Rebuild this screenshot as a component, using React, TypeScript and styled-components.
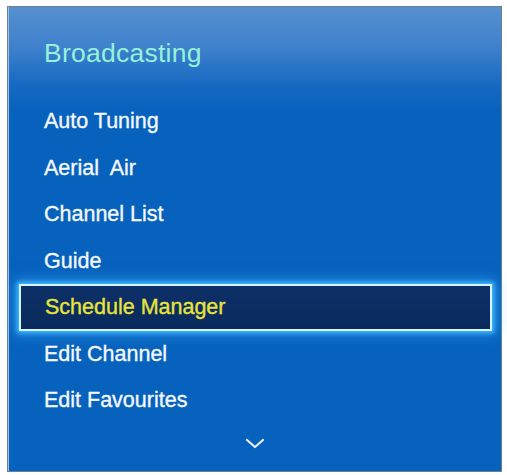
import styled, { createGlobalStyle } from 'styled-components';

const GlobalStyle = createGlobalStyle`
    html, body {
        margin: 0;
        padding: 0;
        background: #ffffff;
    }
`

const SPage = styled.div`
    width: 507px;
    height: 475px;
    padding: 6px 5px 3px 7px;
    box-sizing: border-box;
    font-family: 'Liberation Sans', Arial, sans-serif;
`

const SPanel = styled.section`
    height: 100%;
    box-sizing: border-box;
    border: 1px solid #6d7f92;
    box-shadow: inset 1px 0 0 #9fc0e4;
    background: linear-gradient(180deg, #5590cf 0px, #3f81cc 40px, #1468c2 80px, #0762bd 105px, #0762bd 100%);
    padding-top: 31px;
    display: flex;
    flex-direction: column;
`

const STitle = styled.h1`
    margin: 0;
    padding-left: 36px;
    font-size: 26.5px;
    line-height: 1.2;
    font-weight: normal;
    color: #95f2d6;
    letter-spacing: 0.25px;
`

const SList = styled.ul`
    list-style: none;
    margin: 28.6px 0 0;
    padding: 0 9px 0 11px;
`

const SItem = styled.li<{ $selected?: boolean }>`
    height: 46.5px;
    box-sizing: border-box;
    padding-left: ${({ $selected }) => ($selected ? '24px' : '25px')};
    font-size: 21.5px;
    line-height: ${({ $selected }) => ($selected ? '42.5px' : '46.5px')};
    white-space: pre;
    -webkit-text-stroke: 0.35px currentColor;
    color: ${({ $selected }) => ($selected ? '#e9e43a' : '#f4f8fc')};
    ${({ $selected }) => $selected && `
        border: 2px solid #d6f5ff;
        background: linear-gradient(180deg, #0d3068 0%, #0a2a5c 100%);
        box-shadow: 0 0 4px 2px #40b8ff, 0 0 12px 4px rgba(60, 175, 255, 0.6);
    `}
`

const SMore = styled.div`
    display: flex;
    justify-content: center;
    margin-top: 14px;
`

const menu = [
    'Auto Tuning',
    'Aerial  Air',
    'Channel List',
    'Guide',
    'Schedule Manager',
    'Edit Channel',
    'Edit Favourites',
]

export default function App() {
    const selected = 'Schedule Manager';

    return (
        <SPage>
            <GlobalStyle />
            <SPanel>
                <STitle>Broadcasting</STitle>
                <SList>
                    {menu.map((item) => (
                        <SItem key={item} $selected={item === selected}>{item}</SItem>
                    ))}
                </SList>
                <SMore>
                    <svg width="20" height="11" viewBox="0 0 20 11">
                        <path d="M2 2 L10 9 L18 2" fill="none" stroke="#e8f0fa" strokeWidth="2.2" strokeLinecap="round" strokeLinejoin="round" />
                    </svg>
                </SMore>
            </SPanel>
        </SPage>
    )
}
